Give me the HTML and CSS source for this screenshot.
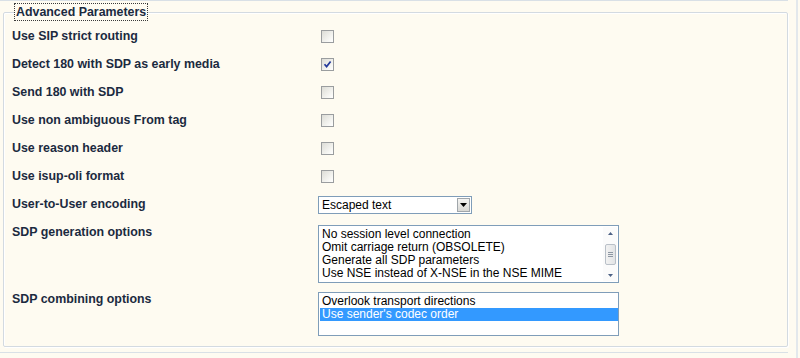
FILE: index.html
```html
<!DOCTYPE html>
<html lang="en">
<head>
  <meta charset="UTF-8">
  <title>Advanced Parameters</title>
  <link rel="stylesheet" href="styles.css">
</head>
<body>
  <div class="page">
    <fieldset class="params">
      <legend><span class="legend-text">Advanced Parameters</span></legend>

      <div class="row">
        <div class="label">Use SIP strict routing</div>
        <div class="field"><span class="check"></span></div>
      </div>
      <div class="row">
        <div class="label">Detect 180 with SDP as early media</div>
        <div class="field">
          <span class="check checked">
            <svg viewBox="0 0 11 11" width="11" height="11"><path d="M2.5 5.2 L4.6 7.6 L8.6 2.4" fill="none" stroke="#22389a" stroke-width="1.7"/></svg>
          </span>
        </div>
      </div>
      <div class="row">
        <div class="label">Send 180 with SDP</div>
        <div class="field"><span class="check"></span></div>
      </div>
      <div class="row">
        <div class="label">Use non ambiguous From tag</div>
        <div class="field"><span class="check"></span></div>
      </div>
      <div class="row">
        <div class="label">Use reason header</div>
        <div class="field"><span class="check"></span></div>
      </div>
      <div class="row">
        <div class="label">Use isup-oli format</div>
        <div class="field"><span class="check"></span></div>
      </div>
      <div class="row">
        <div class="label">User-to-User encoding</div>
        <div class="field">
          <div class="dropdown">
            <span class="dropdown-value">Escaped text</span>
            <span class="dropdown-btn">
              <svg viewBox="0 0 7 4" width="7" height="4"><path d="M0 0 H7 L3.5 4 Z" fill="#000"/></svg>
            </span>
          </div>
        </div>
      </div>
      <div class="row row-top gen">
        <div class="label">SDP generation options</div>
        <div class="field">
          <div class="listbox tall">
            <div class="options">
              <div class="option">No session level connection</div>
              <div class="option">Omit carriage return (OBSOLETE)</div>
              <div class="option">Generate all SDP parameters</div>
              <div class="option">Use NSE instead of X-NSE in the NSE MIME</div>
            </div>
            <div class="scrollbar">
              <svg class="arrow" viewBox="0 0 5 3" width="5" height="3"><path d="M0 3 L2.5 0 L5 3 Z" fill="#4d6185"/></svg>
              <div class="thumb"><span></span><span></span><span></span></div>
              <svg class="arrow" viewBox="0 0 5 3" width="5" height="3"><path d="M0 0 L2.5 3 L5 0 Z" fill="#4d6185"/></svg>
            </div>
          </div>
        </div>
      </div>
      <div class="row row-top comb">
        <div class="label">SDP combining options</div>
        <div class="field">
          <div class="listbox short">
            <div class="options">
              <div class="option">Overlook transport directions</div>
              <div class="option selected">Use sender's codec order</div>
            </div>
          </div>
        </div>
      </div>
    </fieldset>
  </div>
  <div class="rail"></div>
</body>
</html>
```

FILE: styles.css
```css
:root {
  --bg-color: #fefbf1;
  --line-color: #d9e0e6;
  --text-color: #1b2a3f;
  --input-border: #7f9db9;
  --select-color: #3399ff;
}
body {
  margin: 0;
  background: var(--bg-color);
  display: flex;
  height: 358px;
  overflow: hidden;
}
.page {
  width: 788px;
  height: 353px;
  padding-top: 2px;
  border-top: 1px solid var(--line-color);
  border-bottom: 1px solid var(--line-color);
  box-sizing: border-box;
  flex: none;
}
.rail {
  width: 2px;
  margin-left: 8px;
  background: #e3e8ec;
}
.params {
  margin: 0 0 0 3px;
  padding: 1px 8px 10px 8px;
  width: 785px;
  box-sizing: border-box;
  border: 1px solid #d3dae1;
  border-radius: 2px;
  box-shadow: inset 1px 1px 0 #fff, 1px 1px 0 #fff;
  font-family: "Liberation Sans", Arial, sans-serif;
  color: var(--text-color);
}
.params legend {
  padding: 0;
  margin-left: 2px;
}
.legend-text {
  display: block;
  font-weight: bold;
  font-size: 12.4px;
  line-height: 16px;
  padding: 0 1px;
  border: 1px dotted #3a3a3a;
}
.row {
  display: grid;
  grid-template-columns: 306px 1fr;
  align-items: center;
  height: 28px;
}
.row-top {
  align-items: start;
  height: auto;
}
.row.gen {
  padding-top: 7px;
  padding-bottom: 2px;
}
.row.comb {
  padding-top: 7px;
}
.row-top .label {
  margin-top: -1px;
}
.label {
  font-weight: bold;
  font-size: 12.4px;
  line-height: 16px;
}
.field {
  display: flex;
  align-items: center;
}
.check {
  width: 11px;
  height: 11px;
  margin-left: 3px;
  border: 1px solid #9a9d9f;
  background: linear-gradient(135deg, #dcdcd6, #f6f6f3 70%, #fff);
  display: flex;
}
.dropdown {
  width: 154px;
  height: 18px;
  box-sizing: border-box;
  border: 1px solid var(--input-border);
  background: #fff;
  display: flex;
  align-items: center;
  justify-content: space-between;
  margin-top: 1px;
}
.dropdown-value {
  font-size: 12px;
  padding-left: 3px;
  color: #000;
}
.dropdown-btn {
  width: 13px;
  height: 14px;
  margin-right: 1px;
  box-sizing: border-box;
  border: 1px solid #a0a6ab;
  background: linear-gradient(#f4f4f2, #d8d8d4);
  display: flex;
  align-items: center;
  justify-content: center;
}
.listbox {
  width: 301px;
  box-sizing: border-box;
  border: 1px solid var(--input-border);
  background: #fff;
  display: flex;
  font-size: 12px;
  color: #000;
}
.listbox.tall {
  height: 58px;
}
.listbox.short {
  height: 44px;
}
.options {
  flex: 1;
  padding-top: 2px;
}
.option {
  line-height: 13px;
  padding-left: 3px;
  white-space: nowrap;
}
.option.selected {
  background: var(--select-color);
  color: #fff;
  margin: 0 0 0 1px;
  padding-left: 2px;
}
.scrollbar {
  width: 14px;
  margin: 1px 1px 1px 0;
  background: #fbfbfb;
  display: flex;
  flex-direction: column;
  align-items: center;
  justify-content: space-between;
  padding: 5px 0 4px;
  box-sizing: border-box;
}
.thumb {
  width: 11px;
  height: 21px;
  box-sizing: border-box;
  border: 1px solid #b9c0c8;
  border-radius: 2px;
  background: linear-gradient(90deg, #f2f2f2, #e2e4e6);
  display: flex;
  flex-direction: column;
  align-items: center;
  justify-content: center;
  gap: 1px;
}
.thumb span {
  width: 5px;
  height: 1px;
  background: #8d97a3;
}
```
